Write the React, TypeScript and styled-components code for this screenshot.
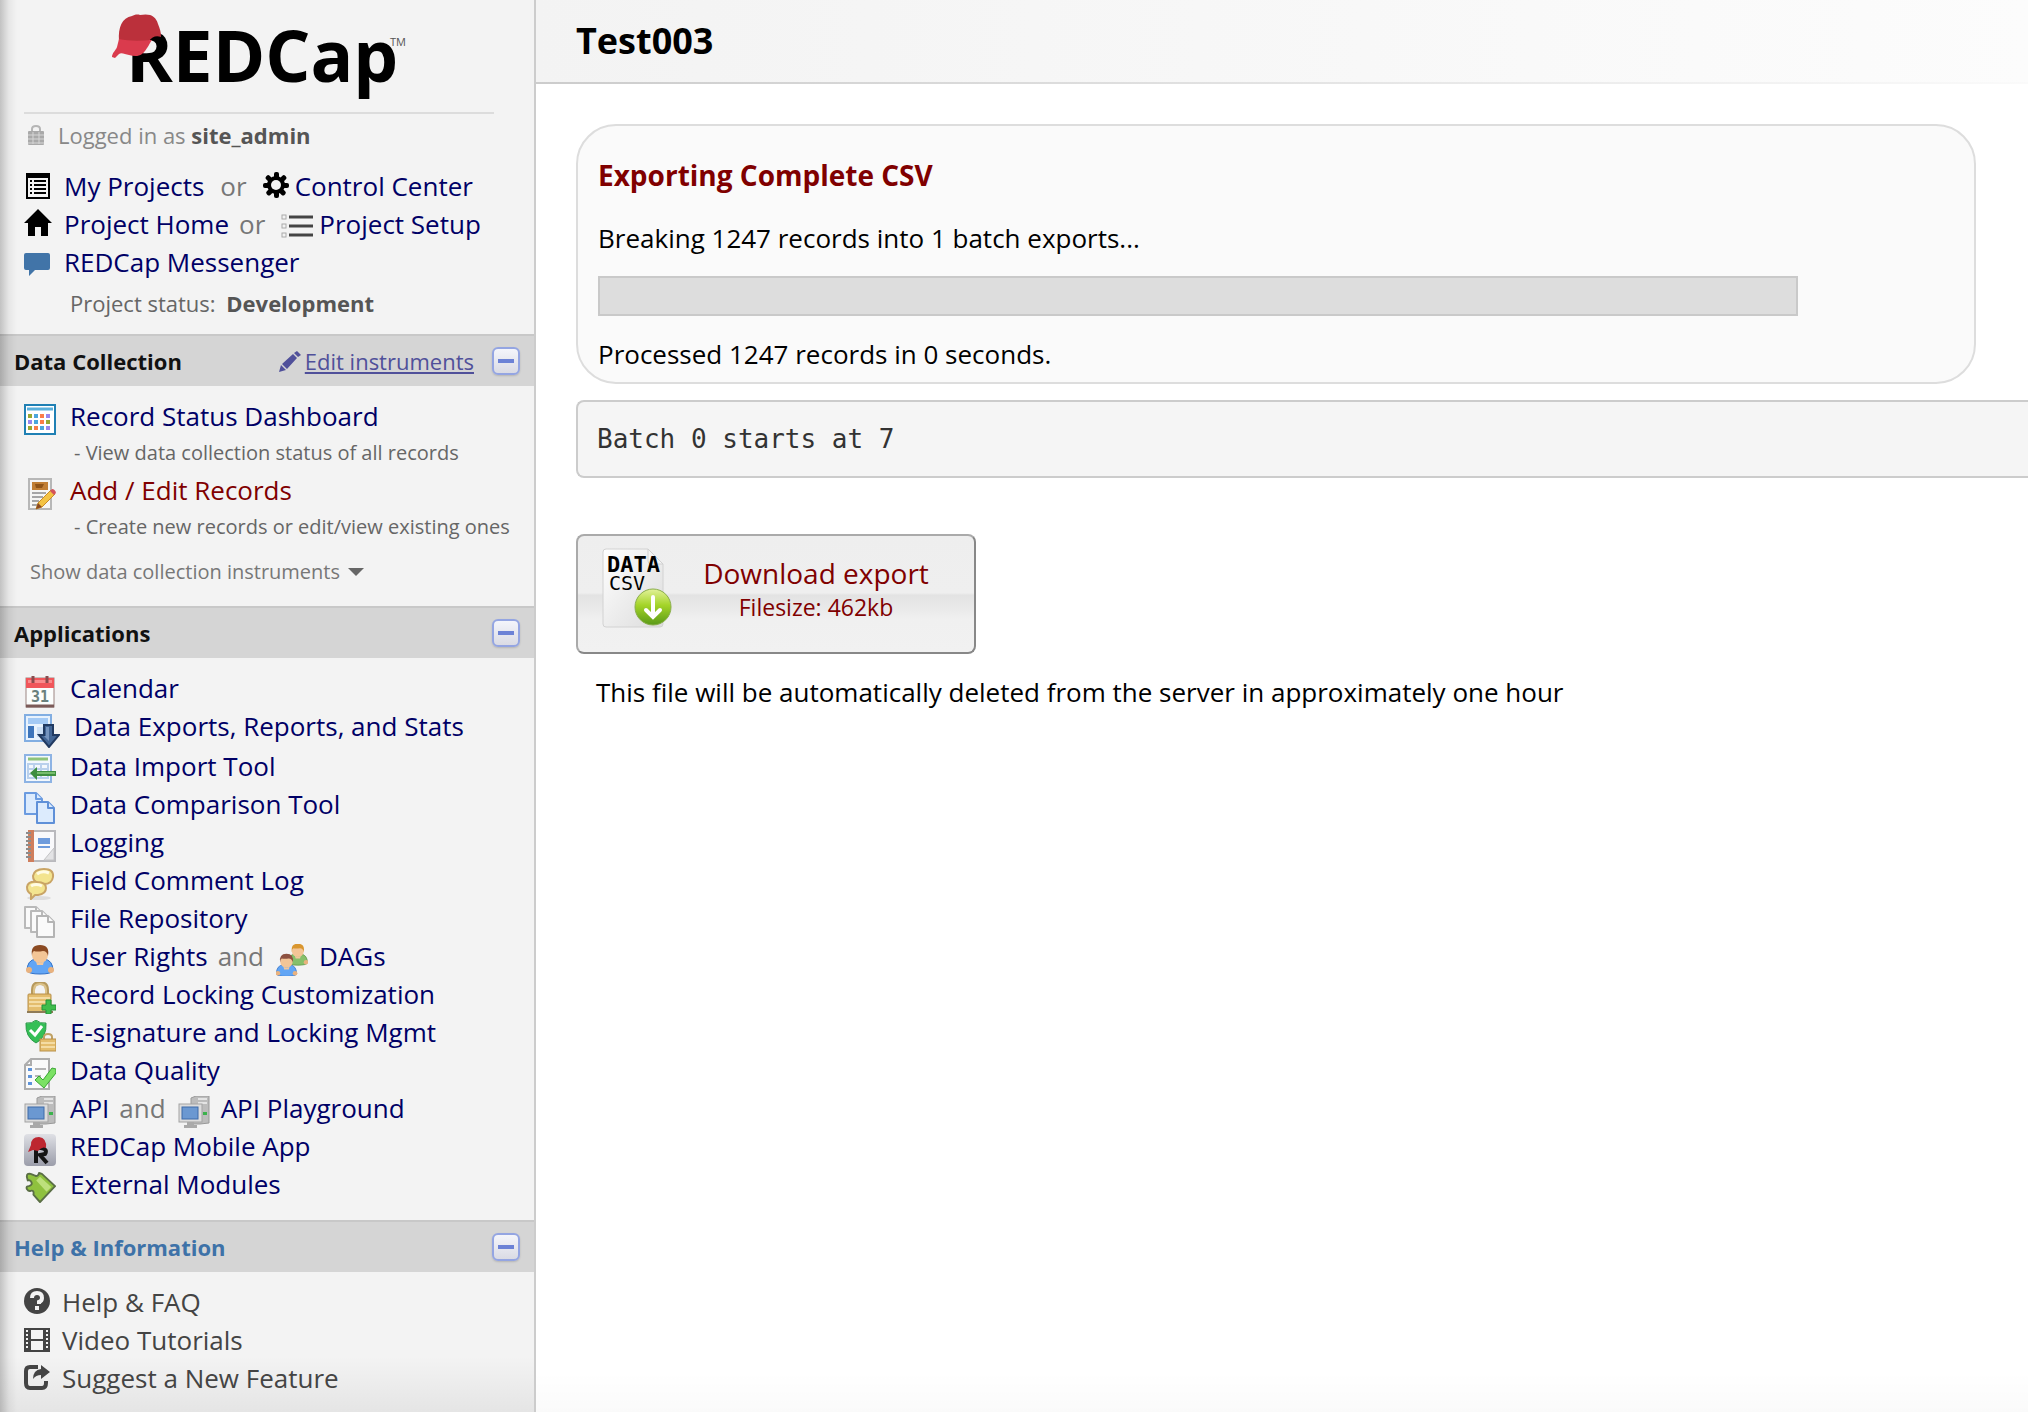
import React from "react";
import styled, { createGlobalStyle } from "styled-components";

const sans = `"Open Sans", "Noto Sans", sans-serif`;
const mono = `"DejaVu Sans Mono", monospace`;

const GlobalStyle = createGlobalStyle`
  *, *::before, *::after { box-sizing: border-box; }
  body { margin: 0; background: #fff; color: #000; font-family: ${sans}; font-size: 26px; line-height: 38px; }
  h1, h2, p, pre, ul { margin: 0; padding: 0; }
  ul { list-style: none; }
  svg { display: block; flex: none; }
`;

/* ---------- page frame ---------- */

const Page = styled.div`
  display: flex;
  min-height: 100vh;
`;

const Sidebar = styled.aside`
  flex: none;
  width: 536px;
  border-right: 2px solid #ccc;
  background:
    linear-gradient(to right, rgba(0, 0, 0, 0.2), rgba(0, 0, 0, 0.05) 9px, transparent 17px),
    linear-gradient(to top, rgba(0, 0, 0, 0.06), transparent 56px),
    #f3f3f3;
`;

const Main = styled.main`
  flex: 1;
  min-width: 0;
  background: linear-gradient(to top, rgba(0, 0, 0, 0.02), transparent 40px);
`;

/* ---------- sidebar parts ---------- */

const Intro = styled.div`
  padding: 0 0 16px 24px;
`;

const LogoLink = styled.a`
  display: flex;
  justify-content: center;
  margin-right: 40px;
  border-bottom: 2px solid #dcdcdc;
`;

const LoginLine = styled.div`
  display: flex;
  align-items: center;
  gap: 6px;
  margin: 6px 0 17px;
  font-size: 22px;
  line-height: 30px;
  color: #888;

  b { color: #555; }
`;

const Status = styled.p`
  padding: 7px 0 0 46px;
  font-size: 22px;
  line-height: 30px;
  color: #666;

  b { margin-left: 5px; color: #555; }
`;

const Shortcut = styled.li`
  display: flex;
  align-items: center;
  white-space: nowrap;
`;

const Slot = styled.span<{ $after?: number }>`
  flex: none;
  margin-right: ${(p) => p.$after ?? 12}px;
`;

const Link = styled.a<{ $tone?: string }>`
  color: ${(p) => p.$tone ?? "#000066"};
  text-decoration: none;
`;

const Joiner = styled.span<{ $before?: number; $after?: number }>`
  margin: 0 ${(p) => p.$after ?? 12}px 0 ${(p) => p.$before ?? 10}px;
  color: #777;
`;

const SectionBar = styled.header`
  display: flex;
  align-items: center;
  height: 52px;
  padding: 0 14px;
  border-top: 2px solid rgba(0, 0, 0, 0.06);
  background: rgba(0, 0, 0, 0.12);
`;

const SectionTitle = styled.h2<{ $tone?: string }>`
  flex: 1;
  font-size: 22px;
  line-height: 30px;
  color: ${(p) => p.$tone ?? "#111"};
`;

const EditLink = styled.a`
  display: flex;
  align-items: center;
  gap: 4px;
  margin-right: 18px;
  font-size: 22px;
  line-height: 30px;
  color: #50509a;
  text-decoration: none;

  span { text-decoration: underline; text-decoration-thickness: 2px; text-underline-offset: 2px; }
`;

const Toggle = styled.button`
  width: 28px;
  height: 28px;
  padding: 0;
  border: 2px solid #94a5e2;
  border-radius: 6px;
  background: linear-gradient(#f4f5fb, #dadbe4);
  box-shadow: 0 1px 2px rgba(0, 0, 0, 0.15);

  &::before {
    content: "";
    display: block;
    width: 16px;
    height: 4px;
    margin: 0 auto;
    background: #6c82d6;
  }
`;

const Menu = styled.ul<{ $bottom?: number }>`
  padding: 11px 0 ${(p) => p.$bottom ?? 17}px 24px;
`;

const MenuItem = styled.li`
  display: flex;
  align-items: flex-start;
  white-space: nowrap;

  > svg { margin: 7px 11px -1px 0; }
  > svg:first-child { margin-right: 14px; }
`;

const Hint = styled.li`
  padding-left: 50px;
  font-size: 20px;
  line-height: 36px;
  color: #666;
  white-space: nowrap;
`;

const ShowItem = styled.li`
  padding: 10px 0 0 6px;
`;

const ShowButton = styled.button`
  display: flex;
  align-items: center;
  gap: 8px;
  padding: 0;
  border: 0;
  background: none;
  font: 20px/34px ${sans};
  color: #777;
`;

/* ---------- main parts ---------- */

const TitleBar = styled.header`
  padding: 17px 40px;
  border-bottom: 2px solid;
  border-image: linear-gradient(to right, #ccc, #fafafa) 1;
  background: linear-gradient(to right, #f3f3f3, #fcfcfc);
`;

const Title = styled.h1`
  font-size: 36px;
  line-height: 48px;
`;

const Content = styled.div`
  padding: 40px 0 40px 40px;
`;

const Panel = styled.section`
  max-width: 1400px;
  margin-right: 40px;
  padding: 30px 20px 9px;
  border: 2px solid #ddd;
  border-radius: 40px;
  background: #fafafa;
`;

const PanelTitle = styled.h2`
  margin-bottom: 25px;
  font-size: 28px;
  line-height: 38px;
  color: #800000;
`;

const Progress = styled.progress`
  appearance: none;
  display: block;
  width: 100%;
  max-width: 1200px;
  height: 40px;
  margin: 19px 0;
  border: 2px solid #c9c9c9;
  background: #ddd;

  &::-webkit-progress-bar { background: #ddd; }
  &::-webkit-progress-value { background: #b4b4b4; }
`;

const Log = styled.pre`
  margin: 16px 0 56px;
  padding: 18px 19px;
  border: 2px solid #ccc;
  border-right: 0;
  border-radius: 8px 0 0 8px;
  background: #f5f5f5;
  color: #333;
  font-family: ${mono};
`;

const Download = styled.button`
  display: flex;
  width: 400px;
  padding: 12px 16px 24px 24px;
  border: 2px solid;
  border-color: #aaa #888 #888 #aaa;
  border-radius: 8px;
  background: linear-gradient(#eee, #efefef 49%, #e3e3e3 51%, #e8e8e8 60%, #f0f0f0 72%, #f1f1f1);
  font: 28px/38px ${sans};
  color: #800000;
`;

const DownloadText = styled.span`
  flex: 1;
  padding-top: 6px;

  small { display: block; font-size: 23px; line-height: 30px; }
`;

const Notice = styled.p`
  padding: 19px 20px 0;
`;

/* ---------- drawings ---------- */

type BoxProps = { w?: number; h?: number; children: React.ReactNode };
const Svg = ({ w = 32, h = 32, children }: BoxProps) => (
  <svg width={w} height={h} viewBox={`0 0 ${w} ${h}`} aria-hidden="true">
    {children}
  </svg>
);

const Logo = () => (
  <svg width="296" height="112" viewBox="0 0 296 112" role="img" aria-label="REDCap">
    <text x="15" y="82" fontFamily="Open Sans" fontWeight="700" fontSize="71">
      REDCap<tspan x="279" y="46" fontWeight="400" fontSize="11" fill="#555">TM</tspan>
    </text>
    <path d="M8 41C7 27 11 18 21 16c2-1 5-2 8-1 10-2 16 1 18 9 2 5 3 8 3 13-5-2-9 0-12 4z" fill="#bb303b" />
    <path d="M8 39c9 2 20 2 33 1-3 4-5 10-10 14-4 3-9 2-13 1-4-1-8-3-10-1l-4 4-3-1c0-4 4-7 5-10z" fill="#da3b4d" />
  </svg>
);

const BagIcon = () => (
  <Svg w={28} h={28}>
    <path d="M8 11V8q0-3 4-3t4 3v3" fill="none" stroke="#b5b5b5" strokeWidth="2" />
    <rect x="4" y="10" width="16" height="14" rx="1" fill="#a9a9a9" />
    <path d="M4 14h16M4 18h16M4 22h16M9 11v12M15 11v12" stroke="#d6d6d6" strokeWidth="1" />
  </Svg>
);

const ListIcon = () => (
  <Svg w={28} h={28}>
    <path d="M2 1h24v26H2zM4 6v19h20V6z" fillRule="evenodd" />
    <path d="M6 8h2v2H6zM6 12h2v2H6zM6 16h2v2H6zM6 20h2v2H6zM10 8h12v2H10zM10 12h12v2H10zM10 16h12v2H10zM10 20h12v2H10z" />
  </Svg>
);

const GearIcon = () => (
  <Svg w={26} h={28}>
    <g transform="translate(13 13)">
      {[0, 45, 90, 135].map((a) => (
        <rect key={a} x="-2" y="-13" width="5" height="26" rx="2" transform={`rotate(${a})`} />
      ))}
      <circle r="9" />
      <circle r="5" fill="#f3f3f3" />
    </g>
  </Svg>
);

const HomeIcon = () => (
  <Svg w={28} h={30}>
    <path d="M14 0l14 14h-4v13h-7v-9h-6v9H4V14H0z" />
  </Svg>
);

const SetupIcon = () => (
  <Svg w={32} h={28}>
    {[7, 16, 25].map((y) => (
      <g key={y}>
        <rect x="1" y={y - 2} width="4" height="4" fill="none" stroke="#aaa" strokeWidth="1" />
        <path d={`M8 ${y}h24`} stroke="#444" strokeWidth="3" />
      </g>
    ))}
  </Svg>
);

const ChatIcon = () => (
  <Svg w={28} h={28}>
    <path d="M2 5h22q2 0 2 2v13q0 2-2 2H11l-6 6v-6H2q-2 0-2-2V7q0-2 2-2z" fill="#4174a8" />
  </Svg>
);

const PencilIcon = () => (
  <Svg w={22} h={24}>
    <path d="M0 23l2-7 5 5zM3 15l11-10 4 4L8 20zM15 4l3-2 4 4-3 2z" fill="#50509a" />
  </Svg>
);

const DashboardIcon = () => (
  <Svg>
    <rect x="1" y="1" width="30" height="29" fill="#fff" stroke="#1f80b4" strokeWidth="2" />
    <path d="M3 5h26" stroke="#5ab0dc" strokeWidth="3" />
    {["#97a832", "#4ba6dc", "#fb7d49", "#9887ee", "#9887ee", "#4ba6dc", "#fb7d49", "#97a832", "#97a832", "#fb7d49", "#4ba6dc", "#9887ee"].map((c, i) => (
      <rect key={i} x={4 + (i % 4) * 6} y={10 + Math.floor(i / 4) * 6} width="4" height="4" fill={c} />
    ))}
  </Svg>
);

const EditRecordIcon = () => (
  <Svg>
    <rect x="5" y="1" width="22" height="30" fill="#f6f6f4" stroke="#b7b7b7" strokeWidth="2" />
    <rect x="8" y="4" width="16" height="8" fill="#c17f34" />
    <path d="M11 6h9l-2 4h-6z" fill="#8f5417" />
    <path d="M8 15h14M8 19h11M8 23h7M8 27h5" stroke="#a6a6a6" strokeWidth="2" />
    <path d="M14 25L27 12l4 4-13 13-6 2z" fill="#f3c343" stroke="#c98a27" strokeWidth="1" />
    <path d="M26 13l2-2q3 0 4 4l-2 2z" fill="#d4535b" />
    <path d="M12 31l2-6 4 4z" fill="#8a4a22" />
  </Svg>
);

const CalendarIcon = () => (
  <Svg>
    <rect x="2" y="2" width="28" height="29" fill="#fbfdfc" stroke="#9c8582" strokeWidth="1" />
    <path d="M2 2h28v10H2z" fill="#f0565a" />
    <path d="M4 4h24v3H4z" fill="#fa8b8c" />
    <path d="M9 0v7M23 0v7" stroke="#8a4b4d" strokeWidth="3" />
    <path d="M2 30h28" stroke="#7b5a58" strokeWidth="3" />
    <text x="16" y="26" textAnchor="middle" fontFamily="DejaVu Sans Mono" fontWeight="700" fontSize="15" fill="#69807d">31</text>
  </Svg>
);

const ExportIcon = () => (
  <Svg w={36} h={34}>
    <rect x="1" y="1" width="26" height="26" fill="#e8f2fd" stroke="#82aee2" strokeWidth="2" />
    <path d="M4 4h20v6H4z" fill="#a4caf5" />
    <path d="M4 12h6v12H4z" fill="#3c74bb" />
    <path d="M13 13h10v10H13z" fill="#cbdff6" />
    <path d="M20 11h9v10h6L25 33 15 21h5z" fill="#426595" stroke="#213a61" strokeWidth="2" />
    <path d="M22 13h3v14l-5-5h2z" fill="#7594bf" />
  </Svg>
);

const ImportIcon = () => (
  <Svg>
    <rect x="1" y="1" width="26" height="27" fill="#f3f8fd" stroke="#8db3e4" strokeWidth="2" />
    <path d="M4 5h20" stroke="#8fc47a" strokeWidth="3" />
    <path d="M4 10h20v14H4zM4 15h20M4 20h20M10 10v14M17 10v14" fill="none" stroke="#b9d0ec" strokeWidth="2" />
    <path d="M6 19l7-6v4h19v5H13v4z" fill="#3f8f3f" />
    <path d="M13 19h18" stroke="#77bd6e" strokeWidth="2" />
  </Svg>
);

type SheetProps = { x: number; y: number; line: string; fill: string };
const Sheet = ({ x, y, line, fill }: SheetProps) => (
  <g transform={`translate(${x} ${y})`} fill={fill} stroke={line} strokeWidth="2" strokeLinejoin="round">
    <path d="M1 1h11l6 6v15H1z" />
    <path d="M12 1v6h6" />
  </g>
);

const CompareIcon = () => (
  <Svg>
    <Sheet x={0} y={0} line="#6b9be0" fill="#dcebfd" />
    <Sheet x={12} y={9} line="#5f90d8" fill="#dcebfd" />
  </Svg>
);

const FilesIcon = () => (
  <Svg>
    <Sheet x={0} y={0} line="#b9b9b9" fill="#fafafa" />
    <Sheet x={6} y={4} line="#b9b9b9" fill="#fafafa" />
    <Sheet x={12} y={9} line="#b4b4b4" fill="#fafafa" />
  </Svg>
);

const LoggingIcon = () => (
  <Svg>
    <rect x="5" y="1" width="26" height="30" fill="#f9f9fb" stroke="#b9b9bd" strokeWidth="2" />
    <path d="M4 0h6v32H4z" fill="#cf7e5d" />
    <path d="M2 3h5M2 7h5M2 11h5M2 15h5M2 19h5M2 23h5M2 27h5" stroke="#8c8c8c" strokeWidth="2" />
    <path d="M14 8h12v6H14zM14 16h12v2H14z" fill="#6e9bdc" />
    <path d="M20 30l10-12v12z" fill="#e3e3e5" stroke="#c4c4c6" strokeWidth="1" />
  </Svg>
);

const CommentIcon = () => (
  <Svg>
    <ellipse cx="15" cy="30" rx="12" ry="2" fill="#ddd" />
    <path d="M9 8q1-7 11-7t9 8q-1 7-9 7h-2l-5 4 1-5q-5-2-5-7z" fill="#f3e48f" stroke="#c9a465" strokeWidth="2" />
    <path d="M3 19q1-6 10-5 9 0 9 6t-8 7h-3l-4 4v-5q-4-2-4-7z" fill="#f3e48f" stroke="#c9a465" strokeWidth="2" />
    <path d="M13 6q5-4 12-1M7 18q5-3 11 0" fill="none" stroke="#fffbe4" strokeWidth="3" />
  </Svg>
);

type PersonProps = { x?: number; y?: number; s?: number; hair?: string; body?: string; edge?: string };
const Person = ({ x = 0, y = 0, s = 1, hair = "#8b4a22", body = "#61a5f5", edge = "#2f6fc6" }: PersonProps) => (
  <g transform={`translate(${x} ${y}) scale(${s})`}>
    <path d="M3 27q0-11 9-12h8q9 1 9 12-2 3-13 3T3 27z" fill={body} stroke={edge} strokeWidth="1" />
    <circle cx="5" cy="26" r="3" fill="#e9b27e" />
    <circle cx="27" cy="26" r="3" fill="#e9b27e" />
    <circle cx="16" cy="11" r="8" fill="#f3c596" />
    <path d="M8 12Q6 1 16 1t8 11q-1-5-5-5-6 1-9 0-2 1-2 5z" fill={hair} />
    <path d="M12 17q4 4 8 0l-1 4h-6z" fill="#f1c79d" />
  </g>
);

const UserIcon = () => (
  <Svg>
    <Person />
  </Svg>
);

const GroupIcon = () => (
  <Svg>
    <Person x={10} y={-1} s={0.74} hair="#d9962e" body="#86bf6a" edge="#5b9442" />
    <Person x={-2} y={9} s={0.78} hair="#8d5140" />
  </Svg>
);

const Padlock = () => (
  <g>
    <path d="M9 14V8q0-7 7-7t7 7v6" fill="none" stroke="#b79a5e" strokeWidth="4" />
    <path d="M10 14V8q0-6 6-6t6 6v6" fill="none" stroke="#dcc38a" strokeWidth="2" />
    <rect x="4" y="12" width="23" height="18" rx="1" fill="#e4bd6d" stroke="#b8904a" strokeWidth="1" />
    <path d="M5 16h21M5 20h21M5 24h21" stroke="#f4dca4" strokeWidth="2" />
    <path d="M3 30h26" stroke="#8f7b57" strokeWidth="2" />
  </g>
);

const LockAddIcon = () => (
  <Svg>
    <Padlock />
    <path d="M22 18h5v5h5v5h-5v4h-5v-4h-4v-5h4z" fill="#3ebd4c" stroke="#23923a" strokeWidth="1" />
  </Svg>
);

const SignatureIcon = () => (
  <Svg>
    <path d="M2 3q6 1 10-3 4 4 10 3 1 14-10 20Q1 17 2 3z" fill="#35bf56" stroke="#2f9b4c" strokeWidth="1" />
    <path d="M6 10l5 5 7-9" fill="none" stroke="#fff" strokeWidth="3" />
    <path d="M20 19v-2q0-3 4-3t4 3v2" fill="none" stroke="#bfa163" strokeWidth="2" />
    <rect x="16" y="19" width="16" height="12" fill="#e4bd6d" stroke="#b8904a" strokeWidth="1" />
    <path d="M17 23h14M17 27h14" stroke="#f4dca4" strokeWidth="2" />
  </Svg>
);

const QualityIcon = () => (
  <Svg>
    <path d="M7 1h18v30H1V7z" fill="#fafafa" stroke="#adadad" strokeWidth="2" />
    <path d="M7 1v6H1" fill="none" stroke="#adadad" strokeWidth="2" />
    <path d="M4 10h4v3H4zM4 17h4v3H4zM4 24h4v3H4z" fill="#5d93da" />
    <path d="M11 11h11M11 18h6" stroke="#b5b5b5" strokeWidth="2" />
    <path d="M11 22l4-4 4 4 9-12 4 1v4L20 30z" fill="#7be164" stroke="#3ba534" strokeWidth="1" />
  </Svg>
);

const ComputerIcon = () => (
  <Svg>
    <path d="M13 2l5-2h13v27l-9 1h-9z" fill="#bcbcbc" stroke="#999" strokeWidth="1" />
    <path d="M20 3h9M20 7h9" stroke="#e4e4e4" strokeWidth="2" />
    <rect x="1" y="8" width="23" height="18" fill="#dcdcdc" stroke="#a3a3a3" strokeWidth="1" />
    <rect x="4" y="11" width="16" height="12" fill="#6b98d1" stroke="#3f6ba8" strokeWidth="1" />
    <path d="M25 16h4v3h-4z" fill="#3bb24c" />
    <path d="M9 26h7v3h3v3H6v-3h3z" fill="#a9a9a9" />
  </Svg>
);

const MobileIcon = () => (
  <Svg>
    <defs>
      <linearGradient id="tile" x1="0" y1="0" x2="0" y2="1">
        <stop offset="0" stopColor="#dfe0e5" />
        <stop offset="1" stopColor="#9b9daa" />
      </linearGradient>
    </defs>
    <rect width="32" height="32" rx="4" fill="url(#tile)" />
    <path d="M12 29V14M12 14h5q7 1 4 6l-5 1 7 8" fill="none" stroke="#151515" strokeWidth="4" />
    <path d="M7 11Q7 3 15 3q8 1 7 11-4-2-8 3l-5-1-5 2z" fill="#bd2630" />
  </Svg>
);

const PuzzleIcon = () => (
  <svg width="32" height="32" viewBox="0 0 34 34" aria-hidden="true">
    <path d="M3 5q0-4 4-3 3 1 5 2 3 1 4-3l3 1 14 13-16 17-7-8q1-5-3-4-2 1-4-2-1-3 2-3 4-1 3-4-1-3-4-2z" fill="#8fc13e" stroke="#5a6e45" strokeWidth="2" strokeLinejoin="round" />
    <path d="M17 5l12 11-5 5L13 9z" fill="#bde07c" />
  </svg>
);

const HelpIcon = () => (
  <Svg w={28} h={28}>
    <circle cx="13" cy="13" r="13" fill="#444" />
    <path d="M8 10q0-5 5-5t5 5q0 3-3 4v2" fill="none" stroke="#f3f3f3" strokeWidth="4" />
    <path d="M11 18h4v4h-4z" fill="#f3f3f3" />
  </Svg>
);

const FilmIcon = () => (
  <Svg w={28} h={28}>
    <path d="M0 2h26v24H0z" fill="#444" />
    <path d="M7 4h12v9H7zM7 15h12v9H7z" fill="#f3f3f3" />
    <path d="M3 4v20M23 4v20" stroke="#f3f3f3" strokeWidth="2" strokeDasharray="2 2" />
  </Svg>
);

const ShareIcon = () => (
  <Svg w={28} h={28}>
    <path d="M14 3H6Q2 3 2 7v12q0 5 4 5h12q4 0 4-5v-2" fill="none" stroke="#444" strokeWidth="4" />
    <path d="M17 1l9 7-9 7v-4q-5 0-8 4 0-9 8-10z" fill="#444" />
  </Svg>
);

const CaretIcon = () => (
  <Svg w={16} h={8}>
    <path d="M0 0h16L8 8z" fill="#666" />
  </Svg>
);

const CsvIcon = () => (
  <Svg w={72} h={80}>
    <defs>
      <linearGradient id="sheet" x1="0" y1="0" x2="1" y2="1">
        <stop offset="0" stopColor="#fff" />
        <stop offset="1" stopColor="#dcdcdc" />
      </linearGradient>
      <linearGradient id="ball" x1="0" y1="0" x2="0" y2="1">
        <stop offset="0" stopColor="#e3f29a" />
        <stop offset="0.45" stopColor="#a4d428" />
        <stop offset="1" stopColor="#5a9a18" />
      </linearGradient>
    </defs>
    <path d="M4 1h42l15 15v60q0 3-3 3H4q-3 0-3-3V4q0-3 3-3z" fill="url(#sheet)" stroke="#d2d2d2" strokeWidth="1" />
    <path d="M46 1l15 15H49q-3 0-3-3z" fill="#f4f4f4" stroke="#d0d0d0" strokeWidth="1" />
    <text x="5" y="24" fontFamily="DejaVu Sans Mono" fontWeight="700" fontSize="22">
      DATA<tspan x="7" y="42" fontWeight="400" fontSize="20">CSV</tspan>
    </text>
    <circle cx="51" cy="59" r="18" fill="url(#ball)" stroke="#8aae4c" strokeWidth="1" />
    <path d="M51 49v19M44 62l7 7 7-7" fill="none" stroke="#fff" strokeWidth="4" strokeLinecap="round" />
  </Svg>
);

/* ---------- content ---------- */

const applications: { icon: React.ReactNode; label: string; also?: { icon: React.ReactNode; label: string } }[] = [
  { icon: <CalendarIcon />, label: "Calendar" },
  { icon: <ExportIcon />, label: "Data Exports, Reports, and Stats" },
  { icon: <ImportIcon />, label: "Data Import Tool" },
  { icon: <CompareIcon />, label: "Data Comparison Tool" },
  { icon: <LoggingIcon />, label: "Logging" },
  { icon: <CommentIcon />, label: "Field Comment Log" },
  { icon: <FilesIcon />, label: "File Repository" },
  { icon: <UserIcon />, label: "User Rights", also: { icon: <GroupIcon />, label: "DAGs" } },
  { icon: <LockAddIcon />, label: "Record Locking Customization" },
  { icon: <SignatureIcon />, label: "E-signature and Locking Mgmt" },
  { icon: <QualityIcon />, label: "Data Quality" },
  { icon: <ComputerIcon />, label: "API", also: { icon: <ComputerIcon />, label: "API Playground" } },
  { icon: <MobileIcon />, label: "REDCap Mobile App" },
  { icon: <PuzzleIcon />, label: "External Modules" },
];

const helpLinks = [
  { icon: <HelpIcon />, label: "Help & FAQ" },
  { icon: <FilmIcon />, label: "Video Tutorials" },
  { icon: <ShareIcon />, label: "Suggest a New Feature" },
];

type SectionProps = { title: string; tone?: string; action?: React.ReactNode; bottom?: number; children: React.ReactNode };
const Section = ({ title, tone, action, bottom, children }: SectionProps) => (
  <section>
    <SectionBar>
      <SectionTitle $tone={tone}>{title}</SectionTitle>
      {action}
      <Toggle type="button" aria-label={`Collapse ${title}`} />
    </SectionBar>
    <Menu $bottom={bottom}>{children}</Menu>
  </section>
);

export default function App() {
  return (
    <Page>
      <GlobalStyle />
      <Sidebar>
        <Intro>
          <LogoLink href="#"><Logo /></LogoLink>
          <LoginLine>
            <BagIcon />
            <span>Logged in as <b>site_admin</b></span>
          </LoginLine>
          <ul>
            <Shortcut>
              <Slot><ListIcon /></Slot>
              <Link href="#">My Projects</Link>
              <Joiner $before={16} $after={16}>or</Joiner>
              <Slot $after={6}><GearIcon /></Slot>
              <Link href="#">Control Center</Link>
            </Shortcut>
            <Shortcut>
              <Slot><HomeIcon /></Slot>
              <Link href="#">Project Home</Link>
              <Joiner $after={16}>or</Joiner>
              <Slot $after={6}><SetupIcon /></Slot>
              <Link href="#">Project Setup</Link>
            </Shortcut>
            <Shortcut>
              <Slot><ChatIcon /></Slot>
              <Link href="#">REDCap Messenger</Link>
            </Shortcut>
          </ul>
          <Status>Project status: <b>Development</b></Status>
        </Intro>

        <Section
          title="Data Collection"
          action={<EditLink href="#"><PencilIcon /><span>Edit instruments</span></EditLink>}
        >
          <MenuItem><DashboardIcon /><Link href="#">Record Status Dashboard</Link></MenuItem>
          <Hint>- View data collection status of all records</Hint>
          <MenuItem><EditRecordIcon /><Link href="#" $tone="#800000">Add / Edit Records</Link></MenuItem>
          <Hint>- Create new records or edit/view existing ones</Hint>
          <ShowItem>
            <ShowButton type="button">Show data collection instruments <CaretIcon /></ShowButton>
          </ShowItem>
        </Section>

        <Section title="Applications">
          {applications.map(({ icon, label, also }) => (
            <MenuItem key={label}>
              {icon}
              <Link href="#">{label}</Link>
              {also && (
                <>
                  <Joiner>and</Joiner>
                  {also.icon}
                  <Link href="#">{also.label}</Link>
                </>
              )}
            </MenuItem>
          ))}
        </Section>

        <Section title="Help & Information" tone="#3e72a8" bottom={0}>
          {helpLinks.map(({ icon, label }) => (
            <Shortcut key={label}>
              <Slot $after={10}>{icon}</Slot>
              <Link href="#" $tone="#444">{label}</Link>
            </Shortcut>
          ))}
        </Section>
      </Sidebar>

      <Main>
        <TitleBar><Title>Test003</Title></TitleBar>
        <Content>
          <Panel>
            <PanelTitle>Exporting Complete CSV</PanelTitle>
            <p>Breaking 1247 records into 1 batch exports...</p>
            <Progress value={0} max={1} aria-label="Export progress" />
            <p>Processed 1247 records in 0 seconds.</p>
          </Panel>
          <Log>Batch 0 starts at 7</Log>
          <Download type="button">
            <CsvIcon />
            <DownloadText>
              Download export
              <small>Filesize: 462kb</small>
            </DownloadText>
          </Download>
          <Notice>This file will be automatically deleted from the server in approximately one hour</Notice>
        </Content>
      </Main>
    </Page>
  );
}
